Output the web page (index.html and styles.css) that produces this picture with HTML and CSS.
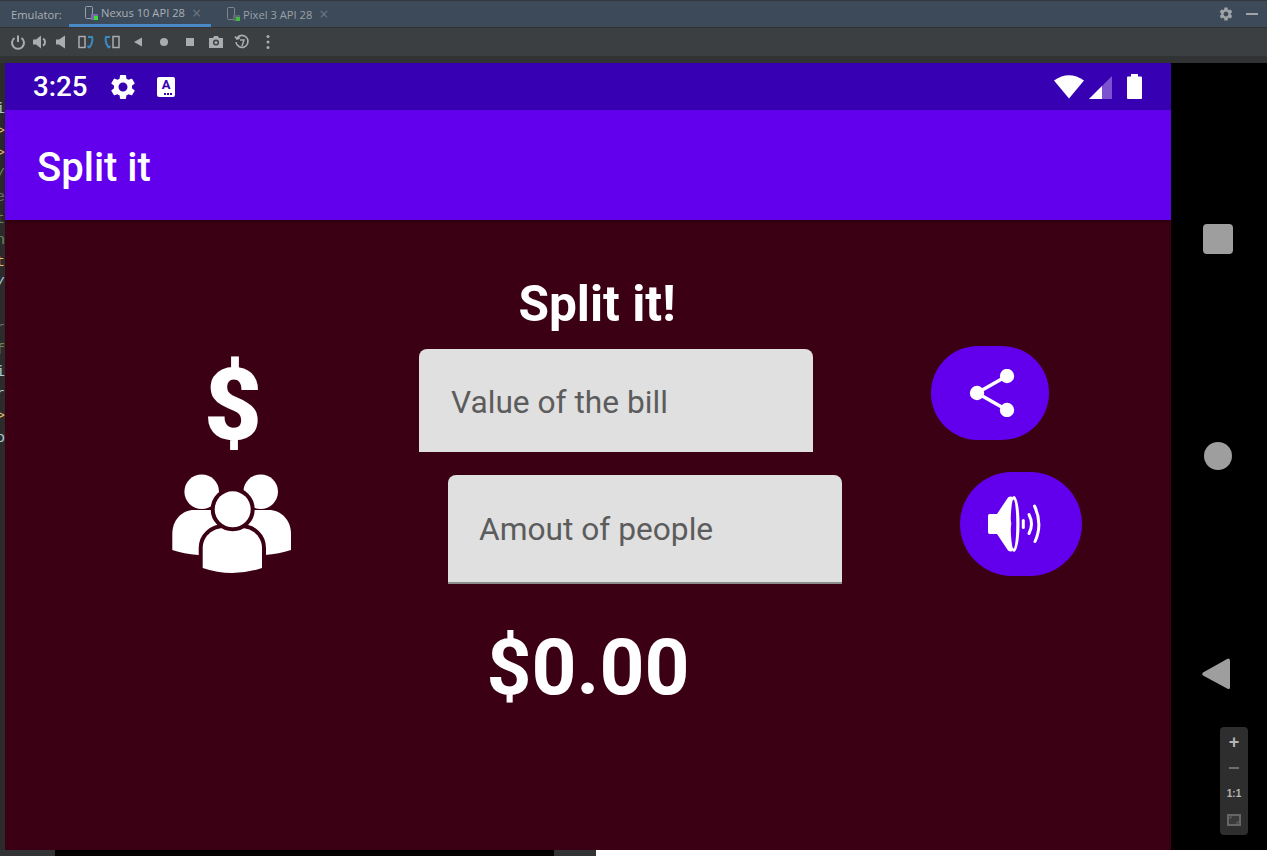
FILE: index.html
```html
<!DOCTYPE html>
<html lang="en">
<head>
  <meta charset="UTF-8" />
  <title>Emulator - Split it</title>
  <link rel="stylesheet" href="styles.css">
</head>
<body>

  <div class="tabs">
    <span class="tabs-label">Emulator:</span>
    <div class="tab tab-active">
      <svg class="tab-icon" width="15" height="16" viewBox="0 0 15 16"><rect x="1.5" y="1.5" width="7" height="12" rx="1" fill="none" stroke="#9aa0a4"/><rect x="7" y="9" width="7" height="6" fill="#7a6aa8"/><rect x="10" y="11" width="4" height="4" fill="#3fdc3f"/></svg>
      <span class="tab-text">Nexus 10 API 28</span>
      <span class="tab-close">×</span>
    </div>
    <div class="tab tab-other">
      <svg class="tab-icon" width="15" height="16" viewBox="0 0 15 16"><rect x="1.5" y="1.5" width="7" height="12" rx="1" fill="none" stroke="#7f868a"/><rect x="7" y="9" width="7" height="6" fill="#5f6a70"/><rect x="10" y="11" width="4" height="4" fill="#3fbc3f"/></svg>
      <span class="tab-text">Pixel 3 API 28</span>
      <span class="tab-close">×</span>
    </div>
    <div class="tabs-right">
      <svg width="16" height="16" viewBox="0 0 24 24"><path fill="#a0a4a8" d="M19.14 12.94c.04-.3.06-.61.06-.94 0-.32-.02-.64-.07-.94l2.03-1.58c.18-.14.23-.41.12-.61l-1.92-3.32c-.12-.22-.37-.29-.59-.22l-2.39.96c-.5-.38-1.03-.7-1.62-.94l-.36-2.54c-.04-.24-.24-.41-.48-.41h-3.84c-.24 0-.43.17-.47.41l-.36 2.54c-.59.24-1.13.57-1.62.94l-2.39-.96c-.22-.08-.47 0-.59.22L2.74 8.87c-.12.21-.08.47.12.61l2.03 1.58c-.05.3-.09.63-.09.94s.02.64.07.94l-2.03 1.58c-.18.14-.23.41-.12.61l1.92 3.32c.12.22.37.29.59.22l2.39-.96c.5.38 1.03.7 1.62.94l.36 2.54c.05.24.24.41.48.41h3.84c.24 0 .44-.17.47-.41l.36-2.54c.59-.24 1.13-.56 1.62-.94l2.39.96c.22.08.47 0 .59-.22l1.92-3.32c.12-.22.07-.47-.12-.61l-2.01-1.58zM12 15.6c-1.98 0-3.6-1.62-3.6-3.6s1.62-3.6 3.6-3.6 3.6 1.62 3.6 3.6-1.62 3.6-3.6 3.6z"/></svg>
      <span class="tabs-min"></span>
    </div>
  </div>

  <div class="tools">
    <svg width="16" height="16" viewBox="0 0 16 16"><path d="M4.5 4A6 6 0 1 0 11.5 4M8 1.5V8" fill="none" stroke="#a9adb0" stroke-width="2"/></svg>
    <svg width="16" height="16" viewBox="0 0 16 16"><path d="M1 5.500H4L9 1.500V14.500L4 10.500H1Z" fill="#a9adb0"/><path d="M11 4.500A4 4 0 0 1 11 11.500" fill="none" stroke="#a9adb0" stroke-width="2"/></svg>
    <svg width="16" height="16" viewBox="0 0 16 16"><path d="M2 5.500H5L11 1.500V14.500L5 10.500H2Z" fill="#a9adb0"/></svg>
    <svg width="16" height="16" viewBox="0 0 16 16"><rect x="1" y="2.500" width="6" height="11" fill="none" stroke="#a9adb0" stroke-width="1.500"/><path d="M10 3H14Q15.500 8 11.500 13.500M9.500 12L12 14" fill="none" stroke="#3a8ac4" stroke-width="2"/></svg>
    <svg width="16" height="16" viewBox="0 0 16 16"><rect x="9" y="2.500" width="6" height="11" fill="none" stroke="#a9adb0" stroke-width="1.500"/><path d="M6 3H2Q.5 8 4.500 13.500M6.500 12L4 14" fill="none" stroke="#3a8ac4" stroke-width="2"/></svg>
    <svg width="16" height="16" viewBox="0 0 16 16"><path d="M12 3.500V12.500L4 8Z" fill="#a9adb0"/></svg>
    <svg width="16" height="16" viewBox="0 0 16 16"><circle cx="8" cy="8" r="4" fill="#a9adb0"/></svg>
    <svg width="16" height="16" viewBox="0 0 16 16"><rect x="4" y="4" width="8" height="8" fill="#a9adb0"/></svg>
    <svg width="16" height="16" viewBox="0 0 16 16"><path d="M1 4H5L6 2H10L11 4H15V14H1Z" fill="#a9adb0"/><circle cx="8" cy="8.500" r="3" fill="#3c3f41"/><circle cx="8" cy="8.500" r="1.500" fill="#a9adb0"/></svg>
    <svg width="16" height="16" viewBox="0 0 16 16"><path d="M3 4A6 6 0 1 1 2 8M1 2.500L3 5L6 4" fill="none" stroke="#a9adb0" stroke-width="1.600"/><path d="M6 6H10L8 12" fill="none" stroke="#a9adb0" stroke-width="1.500"/></svg>
    <svg width="16" height="16" viewBox="0 0 16 16"><circle cx="8" cy="2.500" r="1.500" fill="#a9adb0"/><circle cx="8" cy="8" r="1.500" fill="#a9adb0"/><circle cx="8" cy="13.500" r="1.500" fill="#a9adb0"/></svg>
  </div>

  <div class="strip"></div>

  <div class="main">
    <div class="gutter">
      <span class="code-blue">i</span>
      <span class="code-orange">&gt;</span>
      <span class="code-orange">&gt;</span>
      <span class="code-green">/</span>
      <span class="code-gray">e</span>
      <span class="code-green">t</span>
      <span class="code-green">n</span>
      <span class="code-orange">t</span>
      <span class="code-blue">/</span>
      <span>&nbsp;</span>
      <span class="code-gray">r</span>
      <span class="code-green">f</span>
      <span class="code-blue">i</span>
      <span class="code-blue">r</span>
      <span class="code-orange">&gt;</span>
      <span class="code-blue">o</span>
    </div>

    <div class="screen">
      <div class="status-bar">
        <span class="clock">3:25</span>
        <svg class="status-gear" width="30" height="30" viewBox="0 0 24 24"><path fill="#fff" d="M19.14 12.94c.04-.3.06-.61.06-.94 0-.32-.02-.64-.07-.94l2.03-1.58c.18-.14.23-.41.12-.61l-1.92-3.32c-.12-.22-.37-.29-.59-.22l-2.39.96c-.5-.38-1.03-.7-1.62-.94l-.36-2.54c-.04-.24-.24-.41-.48-.41h-3.84c-.24 0-.43.17-.47.41l-.36 2.54c-.59.24-1.13.57-1.62.94l-2.39-.96c-.22-.08-.47 0-.59.22L2.74 8.87c-.12.21-.08.47.12.61l2.03 1.58c-.05.3-.09.63-.09.94s.02.64.07.94l-2.03 1.58c-.18.14-.23.41-.12.61l1.92 3.32c.12.22.37.29.59.22l2.39-.96c.5.38 1.03.7 1.62.94l.36 2.54c.05.24.24.41.48.41h3.84c.24 0 .44-.17.47-.41l.36-2.54c.59-.24 1.13-.56 1.62-.94l2.39.96c.22.08.47 0 .59-.22l1.92-3.32c.12-.22.07-.47-.12-.61l-2.01-1.58zM12 15.6c-1.98 0-3.6-1.62-3.6-3.6s1.62-3.6 3.6-3.6 3.6 1.62 3.6 3.6-1.62 3.6-3.6 3.6z"/></svg>
        <div class="status-a">
          <span>A</span>
          <i class="status-dots"></i>
        </div>
        <div class="status-right">
          <svg width="30" height="25" viewBox="0 0 30 25"><path d="M0 6.500Q15 -4 30 6.500L15 24.500Z" fill="#fff"/></svg>
          <svg class="status-signal" width="23" height="24" viewBox="0 0 23 24"><path d="M23 0V23H0Z" fill="#7c52d0"/><path d="M13 10V23H0Z" fill="#fff"/></svg>
          <svg class="status-battery" width="15" height="25" viewBox="0 0 15 25"><path d="M4 0H11V2.500H14Q15 2.500 15 3.500V24Q15 25 14 25H1Q0 25 0 24V3.500Q0 2.500 1 2.500H4Z" fill="#fff"/></svg>
        </div>
      </div>

      <div class="app-bar">Split it</div>

      <div class="content">
        <h1 class="title">Split it!</h1>

        <div class="row row-bill">
          <span class="dollar">$</span>
          <div class="field field-bill">Value of the bill</div>
          <button class="fab fab-share">
            <svg class="share" width="48" height="48" viewBox="0 0 48 48">
              <path d="M38 7L8 24L38 41" fill="none" stroke="#fff" stroke-width="3.500"/>
              <circle cx="38" cy="7" r="7.200" fill="#fff"/>
              <circle cx="8" cy="24" r="7.200" fill="#fff"/>
              <circle cx="38" cy="41" r="7.200" fill="#fff"/>
            </svg>
          </button>
        </div>

        <div class="row row-people">
          <svg class="people" width="120" height="100" viewBox="0 0 120 100">
            <circle cx="29.700" cy="17.700" r="17.300" fill="#fff"/>
            <circle cx="88.700" cy="17.700" r="17.300" fill="#fff"/>
            <path d="M.3 76V60C.3 46 10 36 22 36H50V81H26Q12 80 .3 76Z" fill="#fff"/>
            <path d="M119 76V60C119 46 109 36 97 36H70V81H93Q107 80 119 76Z" fill="#fff"/>
            <path class="people-front" d="M30.700 94V74C30.700 63 40 54 52 54H69C81 54 90 63 90 74V94Q60 104 30.700 94Z"/>
            <circle class="people-front" cx="60.700" cy="35.300" r="18"/>
          </svg>
          <div class="field field-people">Amout of people</div>
          <button class="fab fab-sound">
            <svg class="speaker" width="64" height="64" viewBox="0 0 64 64">
              <ellipse cx="26" cy="32" rx="5.500" ry="28" fill="#fff"/>
              <ellipse cx="25.500" cy="32" rx="2.800" ry="24.500" fill="#6200ee"/>
              <path d="M1.500 22H9L20 5.500Q22 4 25 5Q21 15 22 27Q24.500 32 22 37Q21 49 25 59Q22 60 20 58.500L9 42H1.500Q0 42 0 40V24Q0 22 1.500 22Z" fill="#fff"/>
              <path d="M35.300 28.500V35.500" fill="none" stroke="#fff" stroke-width="3" stroke-linecap="round"/>
              <path d="M41 22.500Q46 32 41 41.500" fill="none" stroke="#fff" stroke-width="3" stroke-linecap="round"/>
              <path d="M46.500 14Q55 32 47 49.500" fill="none" stroke="#fff" stroke-width="3" stroke-linecap="round"/>
            </svg>
          </button>
        </div>

        <div class="total">$0.00</div>
      </div>
    </div>

    <div class="side">
      <div class="nav-square"></div>
      <div class="nav-circle"></div>
      <svg class="nav-back" width="28" height="32" viewBox="0 0 28 32"><path d="M26 .5Q28 .5 28 2.500V29.500Q28 31.500 26 31L1 17.500Q-.5 16 1 14.500Z" fill="#9e9e9e"/></svg>
      <div class="zoom-box">
        <span class="zoom-plus">+</span>
        <span class="zoom-minus"></span>
        <span class="zoom-one">1:1</span>
        <svg class="zoom-fit" width="14" height="12" viewBox="0 0 14 12"><rect x="1" y="1" width="12" height="10" fill="#3a3a3a" stroke="#666" stroke-width="2"/><path d="M3 5V3H5M11 7V9H9" fill="none" stroke="#666"/></svg>
      </div>
    </div>
  </div>

  <div class="bottom">
    <div class="bottom-gray"></div>
    <div class="bottom-black"></div>
    <div class="bottom-gray2"></div>
  </div>

</body>
</html>
```

FILE: styles.css
```css
* {
  box-sizing: border-box;
}
html, body {
  margin: 0;
  padding: 0;
}
body {
  width: 1267px;
  height: 856px;
  overflow: hidden;
  background: #fff;
  font-family: Roboto, sans-serif;
}

/* IDE chrome */
.tabs {
  height: 28px;
  display: flex;
  align-items: center;
  background: #3d4a59;
  border-top: 1px solid #33383d;
  border-bottom: 1px solid #323232;
  font-family: "Open Sans", sans-serif;
  font-size: 11.2px;
  color: #aab0b5;
}
.tabs-label {
  width: 69px;
  padding-left: 11px;
}
.tab {
  height: 26px;
  display: flex;
  align-items: center;
}
.tab-active {
  width: 142px;
  padding-left: 15px;
  border-bottom: 3px solid #4a88c7;
}
.tab-other {
  padding-left: 15px;
  color: #9aa1a6;
}
.tab-icon {
  margin-right: 2px;
}
.tab-text {
  white-space: nowrap;
}
.tab-close {
  margin-left: 7px;
  font-size: 16px;
  color: #6d7680;
}
.tabs-right {
  margin-left: auto;
  display: flex;
  align-items: center;
  gap: 12px;
  padding-right: 9px;
}
.tabs-min {
  width: 12px;
  height: 2px;
  background: #a0a4a8;
}
.tools {
  height: 28px;
  display: grid;
  grid-template-columns: 22px 22px 22px repeat(8, 26px);
  align-items: center;
  justify-items: center;
  padding-left: 7px;
  background: #3c3f41;
}
.strip {
  height: 7px;
  background: #303234;
}

.main {
  height: 787px;
  display: flex;
}
.gutter {
  width: 5px;
  padding-top: 36px;
  display: flex;
  flex-direction: column;
  overflow: hidden;
  background: #2b2b2b;
  font-family: "Liberation Mono", monospace;
  font-size: 15px;
  line-height: 21.9px;
}
.gutter span {
  margin-left: -4px;
}
.code-blue { color: #a9c7d8; }
.code-orange { color: #e8bf6a; }
.code-green { color: #6a8759; }
.code-gray { color: #707070; }

/* emulator screen */
.screen {
  width: 1166px;
  display: flex;
  flex-direction: column;
  background: #3c0014;
}
.status-bar {
  height: 47px;
  flex: none;
  display: flex;
  align-items: center;
  background: #3700b3;
  color: #fff;
}
.clock {
  margin-left: 28px;
  font-size: 27.7px;
  font-weight: 500;
  line-height: 51px;
  width: 75px;
}
.status-gear {
  flex: none;
}
.status-a {
  width: 18px;
  height: 20px;
  margin-left: 19px;
  border-radius: 2px;
  background: #fff;
  color: #3700b3;
  font-size: 13px;
  font-weight: 700;
  line-height: 15px;
  text-align: center;
  position: relative;
}
.status-a span {
  display: block;
}
.status-dots {
  position: absolute;
  right: 3px;
  bottom: 2px;
  width: 8px;
  height: 2px;
  background: repeating-linear-gradient(90deg, #3700b3 0 2px, #fff 2px 3px);
}
.status-right {
  margin-left: auto;
  padding-right: 29px;
  display: flex;
  align-items: center;
}
.status-signal {
  margin-left: 5px;
  margin-top: 2px;
}
.status-battery {
  margin-left: 15px;
}
.app-bar {
  height: 110px;
  flex: none;
  padding-left: 32px;
  background: #6200ee;
  color: #fff;
  font-size: 40px;
  font-weight: 500;
  line-height: 116px;
  box-shadow: 0 2px 4px rgba(0, 0, 0, 0.3);
}
.content {
  flex: 1;
}
.title {
  margin: 53px 0 0;
  padding-left: 18px;
  height: 73px;
  color: #fff;
  font-size: 49.6px;
  font-weight: 700;
  line-height: 62px;
  text-align: center;
}
.row {
  display: flex;
  align-items: flex-start;
}
.row-bill {
  height: 126px;
}
.row-people {
  height: 104px;
  padding-left: 167px;
}
.dollar {
  width: 52px;
  margin-left: 199px;
  margin-right: 4px;
  color: #fff;
  font-size: 100px;
  font-weight: 900;
  line-height: 118px;
}
.field {
  width: 394px;
  padding-left: 32px;
  border-radius: 8px 8px 0 0;
  background: #e0e0e0;
  color: #5c5c5c;
  font-size: 31.7px;
}
.field-bill {
  height: 103px;
  margin-top: 3px;
  margin-left: 159px;
  line-height: 108px;
}
.field-people {
  height: 109px;
  margin-top: 3px;
  margin-left: 156px;
  padding-left: 31px;
  border-bottom: 2px solid #8d8d8d;
  line-height: 110px;
}
.fab {
  display: flex;
  align-items: center;
  justify-content: center;
  padding: 0;
  border: none;
  background: #6200ee;
}
.fab-share {
  width: 118px;
  height: 94px;
  margin-left: 118px;
  border-radius: 47px;
}
.fab-sound {
  width: 122px;
  height: 104px;
  margin-left: 118px;
  border-radius: 52px;
}
.share {
  margin-left: 6px;
}
.speaker {
  margin-left: -2px;
}
.people {
  flex: none;
  margin-top: 2px;
}
.people-front {
  fill: #fff;
  stroke: #3c0014;
  stroke-width: 8px;
  paint-order: stroke;
}
.total {
  margin-top: 44px;
  color: #fff;
  font-size: 78.5px;
  font-weight: 700;
  line-height: 94px;
  text-align: center;
}

/* right side of the emulator */
.side {
  flex: 1;
  display: flex;
  flex-direction: column;
  background: #000;
}
.nav-square {
  width: 30px;
  height: 30px;
  margin: 161px 0 0 32px;
  border-radius: 4px;
  background: #9e9e9e;
}
.nav-circle {
  width: 28px;
  height: 28px;
  margin: 188px 0 0 33px;
  border-radius: 50%;
  background: #9e9e9e;
}
.nav-back {
  margin: 188px 0 0 31px;
}
.zoom-box {
  width: 28px;
  height: 108px;
  margin: 37px 0 0 49px;
  display: flex;
  flex-direction: column;
  align-items: center;
  border-radius: 4px;
  background: #2e2e2e;
  color: #b5b5b5;
  font-family: "Liberation Sans", sans-serif;
  font-weight: 700;
}
.zoom-plus {
  height: 26px;
  font-size: 18px;
  line-height: 31px;
}
.zoom-minus {
  width: 10px;
  height: 2px;
  margin-top: 14px;
  background: #6e6e6e;
}
.zoom-one {
  margin-top: 18px;
  height: 14px;
  font-size: 10px;
  line-height: 14px;
}
.zoom-fit {
  margin-top: 13px;
}
.bottom {
  height: 6px;
  display: flex;
}
.bottom-gray { width: 55px; background: #313335; }
.bottom-black { width: 499px; background: #000; }
.bottom-gray2 { width: 42px; background: #313335; }
```
